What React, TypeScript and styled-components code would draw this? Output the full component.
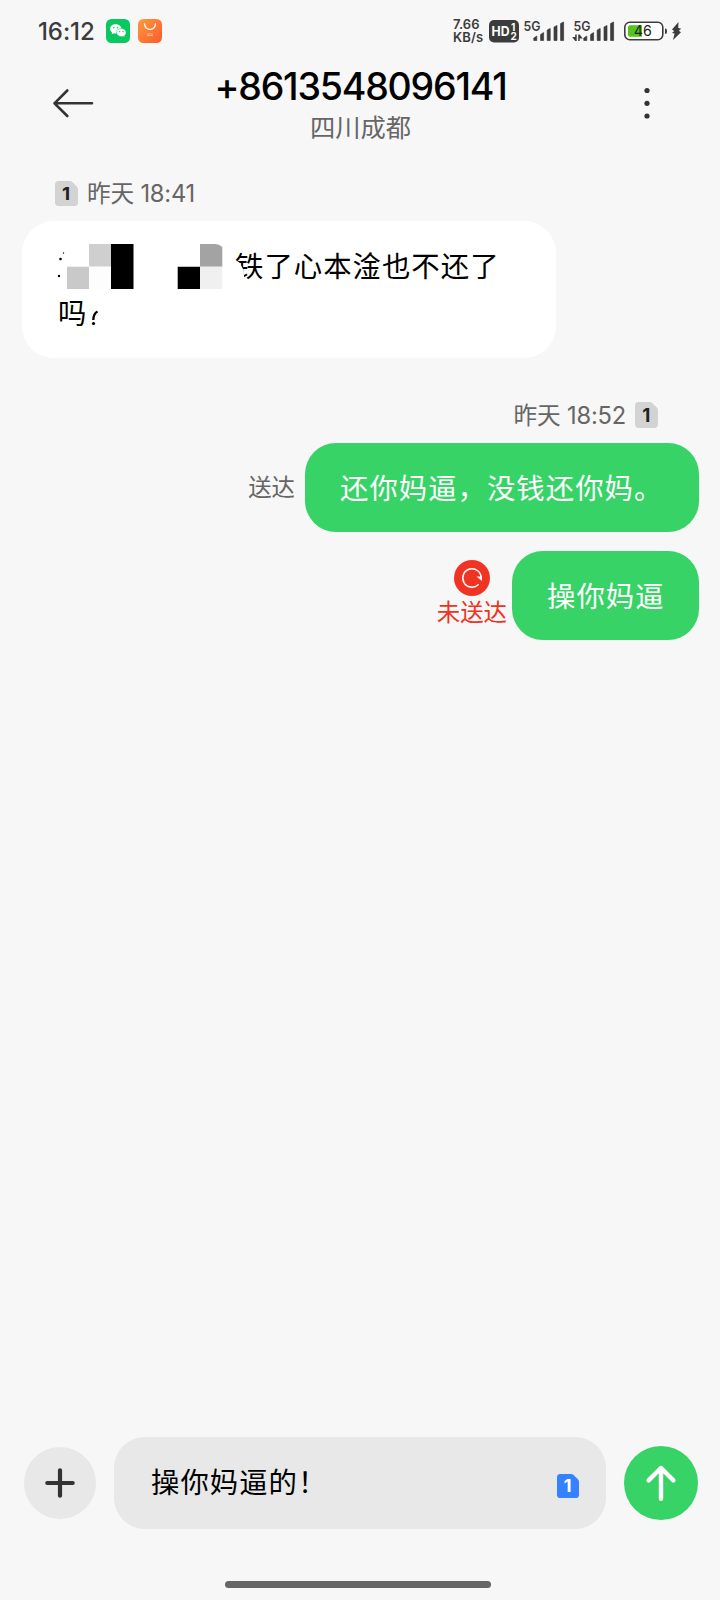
import React from "react";
import styled, { createGlobalStyle } from "styled-components";

const Global = createGlobalStyle`
  * { box-sizing: border-box; }
  body {
    margin: 0;
    background: #f7f7f7;
    font-family: Inter, "Noto Sans CJK SC", sans-serif;
  }
`;

const Screen = styled.div`
  width: 720px;
  height: 1600px;
  display: flex;
  flex-direction: column;
  overflow: hidden;
  background: #f7f7f7;
`;

const StatusBar = styled.div`
  height: 62px;
  padding: 0 37px 0 38px;
  display: flex;
  align-items: center;
  justify-content: space-between;
`;

const StatusGroup = styled.div<{ $gap: number }>`
  display: flex;
  align-items: center;
  gap: ${(p) => p.$gap}px;
`;

const Clock = styled.span`
  width: 60px;
  padding-top: 1px;
  font-size: 24px;
  font-weight: 500;
  line-height: 30px;
  letter-spacing: -0.1px;
  color: #3c3c3c;
  white-space: nowrap;
`;

const NetSpeed = styled.div`
  width: 32px;
  font-size: 13px;
  font-weight: 600;
  line-height: 13px;
  letter-spacing: 0.1px;
  color: #3c3c3c;
  white-space: nowrap;
`;

const Header = styled.header`
  height: 82px;
  padding: 0 64px 0 51px;
  display: flex;
  align-items: center;
  justify-content: space-between;
`;

const IconButton = styled.button`
  padding: 0;
  border: 0;
  background: none;
  display: flex;
`;

const Contact = styled.div`
  display: flex;
  flex-direction: column;
  align-items: center;
  margin-left: -12px;
  padding-top: 5px;
`;

const ContactNumber = styled.h1`
  margin: 0;
  font-size: 37.5px;
  font-weight: 450;
  line-height: 43px;
  letter-spacing: -1.2px;
  color: #000;
  white-space: nowrap;
`;

const ContactRegion = styled.div`
  font-size: 25.3px;
  line-height: 39px;
  color: #666;
`;

const Thread = styled.main`
  flex: 1;
  padding: 33px 21px 0 22px;
  display: flex;
  flex-direction: column;
`;

const Stamp = styled.div<{ $sent?: boolean }>`
  height: 32px;
  display: flex;
  align-items: center;
  align-self: ${(p) => (p.$sent ? "flex-end" : "flex-start")};
  gap: ${(p) => (p.$sent ? 9 : 9)}px;
  margin: ${(p) => (p.$sent ? "41px 41px 12px 0" : "0 0 12px 33px")};
  color: #666;
`;

const StampText = styled.span`
  padding-top: 1px;
  font-size: 23.7px;
  line-height: 32px;
  letter-spacing: -0.2px;
  white-space: nowrap;
`;

const ReceivedBubble = styled.div`
  position: relative;
  width: 534px;
  height: 137px;
  padding: 22px 36px;
  border-radius: 32px;
  background: #fff;
  color: #000;
  font-size: 28.4px;
  letter-spacing: 1px;
  line-height: 47px;
`;

const Line = styled.div`
  display: flex;
  height: 47px;
  white-space: nowrap;
`;

const Redaction = styled.svg`
  position: absolute;
  left: 0;
  top: 0;
`;

const HiddenGap = styled.span`
  width: 177px;
`;

const SentRow = styled.div`
  display: flex;
  justify-content: flex-end;
  align-items: center;
  margin-bottom: 19px;
`;

const SentBubble = styled.div<{ $width: number }>`
  width: ${(p) => p.$width}px;
  height: 89px;
  padding: 1px 35px 0;
  border-radius: 31px;
  background: #37d367;
  color: #fff;
  font-size: 28.4px;
  letter-spacing: 1px;
  line-height: 89px;
  white-space: nowrap;
`;

const Delivered = styled.span`
  margin-right: 10px;
  padding-top: 1px;
  font-size: 23.4px;
  line-height: 32px;
  color: #666;
`;

const Failed = styled.div`
  display: flex;
  flex-direction: column;
  align-items: center;
  margin: 0 5px 3px 0;
  font-size: 23.4px;
  line-height: 32px;
  color: #ee3322;

  svg { margin-bottom: 1px; }
`;

const Composer = styled.footer`
  height: 92px;
  padding: 0 22px 0 24px;
  display: flex;
  align-items: center;
  justify-content: space-between;
`;

const RoundButton = styled.button<{ $size: number; $bg: string }>`
  width: ${(p) => p.$size}px;
  height: ${(p) => p.$size}px;
  padding: 0;
  border: 0;
  border-radius: 50%;
  background: ${(p) => p.$bg};
  display: flex;
  align-items: center;
  justify-content: center;
`;

const Field = styled.div`
  width: 492px;
  height: 92px;
  padding: 5px 27px 0 37px;
  border-radius: 31px;
  background: #e8e8e8;
  display: flex;
  align-items: center;
  justify-content: space-between;
`;

const Draft = styled.span`
  font-size: 28.4px;
  letter-spacing: 1px;
  line-height: 44px;
  margin-top: -5px;
  color: #000;
  white-space: nowrap;
`;

const HomeArea = styled.div`
  height: 71px;
  padding-top: 52px;
  display: flex;
  justify-content: center;
`;

const HomeBar = styled.div`
  width: 266px;
  height: 7px;
  margin-right: 4px;
  border-radius: 4px;
  background: #666;
`;

const SimBadge = ({ w, h, bg, fg }: { w: number; h: number; bg: string; fg: string }) => (
  <svg width={w} height={h} viewBox="0 0 22 25" preserveAspectRatio="none">
    <path d="M3.5 0H14Q15.5 0 16.6 1.1L20.9 5.4Q22 6.500 22 8V21.500Q22 25 18.500 25H3.500Q0 25 0 21.500V3.500Q0 0 3.500 0Z" fill={bg} />
    <text x="10.700" y="19" textAnchor="middle" fontFamily="Inter" fontWeight="700" fontSize="18" fill={fg}>1</text>
  </svg>
);

const Signal = ({ data }: { data?: boolean }) => (
  <svg width="42" height="24" viewBox="0 0 42 24" fill="#3c3c3c" overflow="visible">
    <text x="0.500" y="11.500" fontFamily="Inter" fontWeight="600" fontSize="13.500" textLength="17" lengthAdjust="spacingAndGlyphs">5G</text>
    <g stroke="#3c3c3c" strokeWidth=".7" strokeLinejoin="round">
      <path d="M10.800 21.500v-2.500l3-2v4.500zM17.600 21.500v-6l3-2v8zM24.200 21.500V11l3-1.500v12zM31 21.500V8l3-1.500v15zM37.600 21.500V4.500l3-1.500v18.500z" />
    </g>
    {data && (
      <path d="M3.700 15.500v6.500H2.200L-.800 18h3v-2.500zM5.200 22v-6.500h1.500L9.700 19.500H6.700V22z" />
    )}
  </svg>
);

export default function App() {
  return (
    <>
      <Global />
      <Screen>
        <StatusBar>
          <StatusGroup $gap={8}>
            <Clock>16:12</Clock>
            <svg width="24" height="24" viewBox="0 0 24 24">
              <rect width="24" height="24" rx="5.500" fill="#07c960" />
              <path d="M9.700 5.300c-3.200 0-5.600 2-5.600 4.600 0 1.500.8 2.700 2 3.500l-.5 1.800 2-1q1 .3 2.400.3c3 0 5.500-2 5.500-4.600S12.800 5.300 9.700 5.300z" fill="#fff" />
              <path d="M15.300 9.500c-2.700 0-4.800 1.700-4.800 4s2.100 4 4.800 4q1 0 1.900-.3l1.700 1-.4-1.600c1-.7 1.600-1.800 1.600-3.100 0-2.300-2.100-4-4.800-4z" fill="#fff" stroke="#07c960" strokeWidth=".5" />
              <g fill="#07c960"><circle cx="7.800" cy="8.700" r=".8" /><circle cx="11.500" cy="8.700" r=".8" /><circle cx="13.700" cy="12.500" r=".65" /><circle cx="17" cy="12.500" r=".65" /></g>
            </svg>
            <svg width="24" height="24" viewBox="0 0 24 24">
              <defs>
                <linearGradient id="shop" x1="0" y1="0" x2="1" y2="1">
                  <stop offset="0" stopColor="#ff9a3c" />
                  <stop offset="1" stopColor="#fa5a2e" />
                </linearGradient>
              </defs>
              <rect width="24" height="24" rx="5.500" fill="url(#shop)" />
              <path d="M6.500 5q.7 5.300 5.500 5.300T17.500 5" fill="none" stroke="#fff" strokeWidth="1.300" strokeLinecap="round" />
              <path d="M9 15h6M9 16.500h6" stroke="#ffc09a" strokeWidth=".9" />
            </svg>
          </StatusGroup>
          <StatusGroup $gap={4}>
            <NetSpeed>
              <div>7.66</div>
              <div>KB/s</div>
            </NetSpeed>
            <svg width="30" height="23" viewBox="0 0 30 23">
              <rect width="30" height="22.500" rx="5" fill="#3c3c3c" />
              <g fill="#fff" fontFamily="Inter" fontWeight="700">
                <text x="2.500" y="16" fontSize="13" textLength="18" lengthAdjust="spacingAndGlyphs">HD</text>
                <text x="22" y="10.500" fontSize="10">1</text>
                <text x="21.500" y="20" fontSize="10">2</text>
              </g>
            </svg>
            <StatusGroup $gap={8}>
              <Signal />
              <Signal data />
            </StatusGroup>
            <svg width="64" height="22" viewBox="-1 0 64 22">
              <rect x="4.800" y="2.300" width="38" height="17.400" rx="5" fill="#fff" stroke="#3c3c3c" strokeWidth="1.600" />
              <path d="M10 5.200h12v11.600H10q-2 0-2-2v-7.600q0-2 2-2z" fill="#52c41a" />
              <path d="M45 8.500q2 0 2 2v1.500q0 2-2 2z" fill="#3c3c3c" />
              <text x="13.800" y="16.300" fontFamily="Inter" fontSize="14.500" fill="#222" textLength="18" lengthAdjust="spacingAndGlyphs">46</text>
              <path d="M58.500 2L52 9.500l2.200 1.500-2.200 2 2.600.6-1.600 6.400 8-7.800-2.200-1.500 2.400-2-3-.6z" fill="#3c3c3c" />
            </svg>
          </StatusGroup>
        </StatusBar>

        <Header>
          <IconButton aria-label="返回">
            <svg width="44" height="32" viewBox="0 0 44 32" fill="none" stroke="#333" strokeWidth="2.600" strokeLinecap="round" strokeLinejoin="round">
              <path d="M41 16.300H3.500M16.300 3.500L3.500 16.300l12.800 12.700" />
            </svg>
          </IconButton>
          <Contact>
            <ContactNumber>+8613548096141</ContactNumber>
            <ContactRegion>四川成都</ContactRegion>
          </Contact>
          <IconButton aria-label="更多">
            <svg width="18" height="32" viewBox="0 0 18 32" fill="#333">
              <circle cx="9" cy="3.500" r="2.600" />
              <circle cx="9" cy="16.300" r="2.600" />
              <circle cx="9" cy="29" r="2.600" />
            </svg>
          </IconButton>
        </Header>

        <Thread>
          <Stamp>
            <SimBadge w={23} h={25} bg="#d3d3d3" fg="#222" />
            <StampText>昨天 18:41</StampText>
          </Stamp>
          <ReceivedBubble>
            <Line>
              <HiddenGap />
              <span>铁了心本淦也不还了</span>
            </Line>
            <Line>吗？</Line>
            <Redaction width="534" height="137" viewBox="22 221 534 137">
              <circle cx="60.500" cy="259" r="1.300" />
              <circle cx="63.500" cy="253" r=".7" />
              <circle cx="59" cy="276" r="1.200" />
              <path d="M89 244h22v22.700H89z" fill="#cfcfcf" />
              <path d="M67 266.700h22V289H67z" fill="#c9c9c9" />
              <path d="M89 266.700h22V289H89z" fill="#fdfdfd" />
              <path d="M111 244h22.500v45H111zM177.700 266.700H200V289h-22.300z" fill="#000" />
              <path d="M200 244h15q4 0 7.300 3v19.700H200z" fill="#a3a3a3" />
              <path d="M200 266.700h22.300V289H200z" fill="#f0f0f0" />
              <path d="M232 263l7-1 4 7 2 14H232z" fill="#fff" />
              <path d="M86.500 296h32v40h-28v-12z" fill="#fff" />
              <path d="M97.500 311.500q-4 2-4.200 8.500" fill="none" stroke="#000" strokeWidth="2.300" />
              <circle cx="93.500" cy="323.500" r="1.600" />
            </Redaction>
          </ReceivedBubble>

          <Stamp $sent>
            <StampText>昨天 18:52</StampText>
            <SimBadge w={23} h={26} bg="#d3d3d3" fg="#222" />
          </Stamp>
          <SentRow>
            <Delivered>送达</Delivered>
            <SentBubble $width={394}>还你妈逼，没钱还你妈。</SentBubble>
          </SentRow>
          <SentRow>
            <Failed>
              <svg width="36" height="36" viewBox="0 0 36 36">
                <circle cx="18" cy="18" r="18" fill="#f03423" />
                <path d="M24.200 24.800A9.200 9.200 0 1 1 27.200 18" fill="none" stroke="#fff" strokeWidth="1.500" strokeLinecap="round" />
                <path d="M22.500 16.500h5.500v4.500z" fill="#fff" />
              </svg>
              <span>未送达</span>
            </Failed>
            <SentBubble $width={187}>操你妈逼</SentBubble>
          </SentRow>
        </Thread>

        <Composer>
          <RoundButton $size={72} $bg="#e8e8e8" aria-label="添加">
            <svg width="32" height="32" viewBox="0 0 32 32" stroke="#333" strokeWidth="4.200" strokeLinecap="round">
              <path d="M3.300 16h25.400M16 3.300v25.400" />
            </svg>
          </RoundButton>
          <Field>
            <Draft>操你妈逼的！</Draft>
            <SimBadge w={22} h={24} bg="#3482ff" fg="#fff" />
          </Field>
          <RoundButton $size={74} $bg="#37d367" aria-label="发送">
            <svg width="34" height="38" viewBox="0 0 34 38" fill="none" stroke="#fff" strokeWidth="4.400" strokeLinecap="round" strokeLinejoin="round">
              <path d="M17 34.800V4M4.600 16.400L17 4l12.400 12.400" />
            </svg>
          </RoundButton>
        </Composer>
        <HomeArea>
          <HomeBar />
        </HomeArea>
      </Screen>
    </>
  );
}
